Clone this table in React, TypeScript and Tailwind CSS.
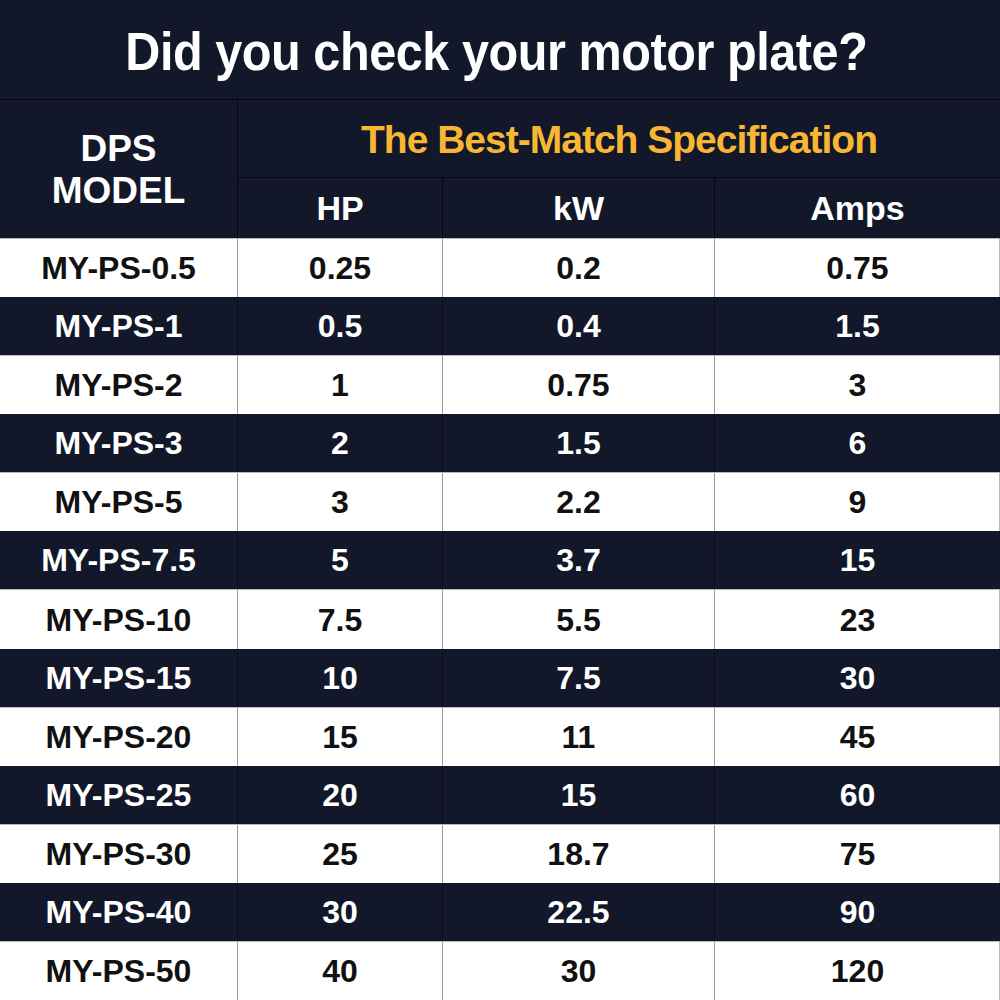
import React from "react";

const rows: [string, string, string, string][] = [
  ["MY-PS-0.5", "0.25", "0.2", "0.75"],
  ["MY-PS-1", "0.5", "0.4", "1.5"],
  ["MY-PS-2", "1", "0.75", "3"],
  ["MY-PS-3", "2", "1.5", "6"],
  ["MY-PS-5", "3", "2.2", "9"],
  ["MY-PS-7.5", "5", "3.7", "15"],
  ["MY-PS-10", "7.5", "5.5", "23"],
  ["MY-PS-15", "10", "7.5", "30"],
  ["MY-PS-20", "15", "11", "45"],
  ["MY-PS-25", "20", "15", "60"],
  ["MY-PS-30", "25", "18.7", "75"],
  ["MY-PS-40", "30", "22.5", "90"],
  ["MY-PS-50", "40", "30", "120"],
];

export default function App() {
  return (
    <div
      className="w-[1000px] h-[1000px] bg-[#121829] flex flex-col overflow-hidden font-bold"
      style={{ fontFamily: '"Liberation Sans", Arial, sans-serif' }}
    >
      <div className="h-[100px] shrink-0 flex items-center justify-center border-b border-[#05070d]">
        <span className="text-[54px] leading-none text-white tracking-[-0.5px] scale-x-[0.9] whitespace-nowrap -translate-x-[4px] translate-y-[1px]">
          Did you check your motor plate?
        </span>
      </div>
      <div className="h-[138px] shrink-0 grid grid-cols-[238px_205px_272px_285px] grid-rows-[78px_60px] text-white">
        <div className="row-span-2 border-r border-[#05070d] flex flex-col items-center justify-center text-[37px] leading-[42px] pt-[2px]">
          <span>DPS</span>
          <span>MODEL</span>
        </div>
        <div className="col-span-3 border-b border-[#05070d] flex items-center justify-center text-[39px] leading-none text-[#f8b733] tracking-[-1px] whitespace-nowrap pt-[1px]">
          The Best-Match Specification
        </div>
        <div className="border-r border-[#05070d] flex items-center justify-center text-[34px] leading-none">HP</div>
        <div className="border-r border-[#05070d] flex items-center justify-center text-[34px] leading-none">kW</div>
        <div className="flex items-center justify-center text-[34px] leading-none">Amps</div>
      </div>
      <div className="flex-1 flex flex-col">
        {rows.map((r, i) => {
          const white = i % 2 === 0;
          return (
            <div
              key={i}
              className={
                white
                  ? "flex-1 grid grid-cols-[238px_205px_272px_285px] bg-white text-[#111111] border-t border-[#b8b8b8] border-r border-r-[#b8b8b8]"
                  : "flex-1 grid grid-cols-[238px_205px_272px_285px] bg-[#121829] text-white"
              }
            >
              {r.map((c, j) => (
                <div
                  key={j}
                  className={
                    "flex items-center justify-center text-[32px] leading-none " +
                    (j < 3 ? (white ? "border-r border-[#9a9a9a]" : "border-r border-[#0a0e1a]") : "")
                  }
                >
                  {c}
                </div>
              ))}
            </div>
          );
        })}
      </div>
    </div>
  );
}
